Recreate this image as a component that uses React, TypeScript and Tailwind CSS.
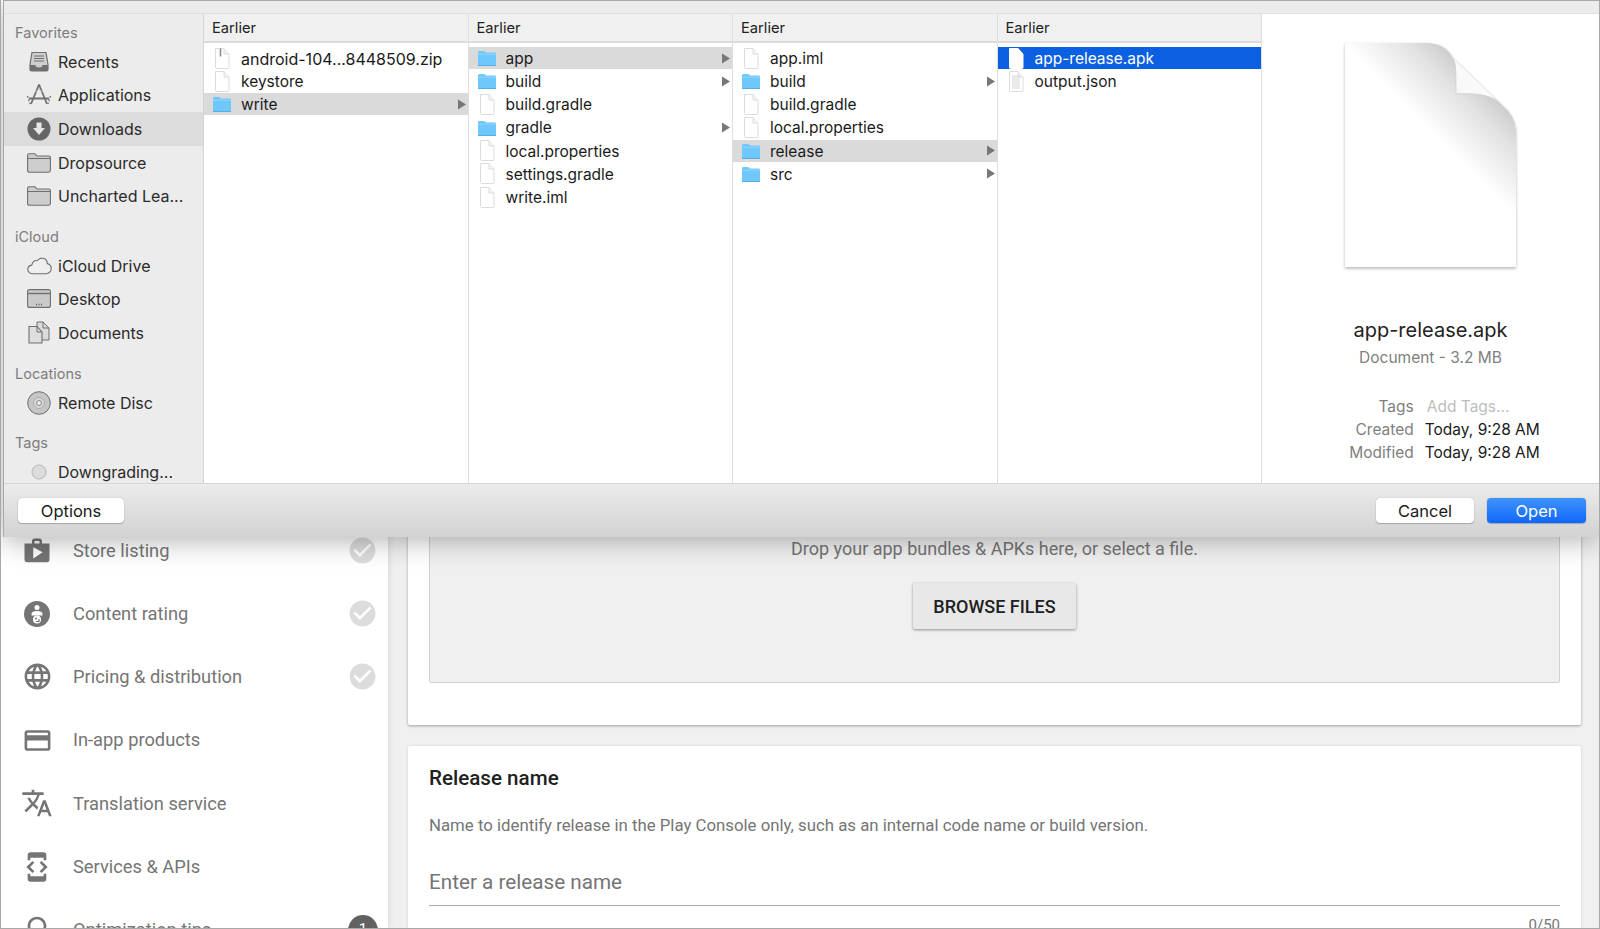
import { MdShop, MdLanguage, MdCreditCard, MdTranslate, MdDeveloperMode, MdCheckCircle, MdLightbulbOutline } from "react-icons/md";

type Kind = "file" | "folder" | "zip" | "text";

function FileIcon({ kind, selected }: { kind: Kind; selected?: boolean }) {
  if (kind === "folder") {
    return (
      <svg width="20" height="18" viewBox="0 0 20 18" className="shrink-0">
        <path d="M1 3.500C1 2.600 1.600 2 2.500 2h4.200c.6 0 1 .2 1.400.6L9 3.500h8.500c.9 0 1.500.6 1.500 1.500v10.500c0 .9-.6 1.500-1.500 1.500h-15C1.600 17 1 16.400 1 15.500z" fill="#6fc8fb" />
        <path d="M1 5.200h18" stroke="#93d6fc" strokeWidth="1" />
        <path d="M1 16.500h18" stroke="#55aee6" strokeWidth="1" />
      </svg>
    );
  }
  return (
    <svg width="20" height="23" viewBox="0 0 20 23" className="shrink-0">
      <path
        d="M3.500 1.500h8.500l5 5.500v13.500c0 .6-.4 1-1 1H4.500c-.6 0-1-.4-1-1z"
        fill="#fff"
        stroke={selected ? "#fff" : "#dcdcdc"}
        strokeWidth="1"
      />
      <path d="M12 1.500v5.500h5" fill={selected ? "#fff" : "#f4f4f4"} stroke={selected ? "#fff" : "#dcdcdc"} strokeWidth="1" />
      {kind === "zip" && <path d="M8.500 1.500v8" stroke="#8a8a8a" strokeWidth="1.600" />}
      {kind === "text" &&
        [6, 8, 10, 12, 14, 16, 18].map((y) => (
          <path key={y} d={`M6 ${y}h8`} stroke="#d4d4d4" strokeWidth="1" />
        ))}
    </svg>
  );
}

function Row({ name, kind, active, selected }: { name: string; kind: Kind; active?: boolean; selected?: boolean }) {
  return (
    <div
      className={`mb-[1.2px] flex h-[22px] items-center pl-[8px] pr-[1px] ${kind === "zip" ? "text-[16px]" : "text-[15.500px]"} ${
        selected ? "bg-[#0a60e0] text-white" : active ? "bg-[#dadada] text-[#1a1a1a]" : "text-[#1a1a1a]"
      }`}
    >
      <FileIcon kind={kind} selected={selected} />
      <span className="ml-[9px] flex-1 whitespace-nowrap pt-[1px]">{name}</span>
      {kind === "folder" && (
        <svg width="10" height="11" viewBox="0 0 10 11">
          <path d="M1 .5l8 5-8 5z" fill="#777" />
        </svg>
      )}
    </div>
  );
}

function Column({ rows }: { rows: { name: string; kind: Kind; active?: boolean; selected?: boolean }[] }) {
  return (
    <div className="flex h-full w-[264.500px] shrink-0 flex-col border-r border-[#dedede] bg-white">
      <div className="flex h-[29px] shrink-0 items-center border-b-2 border-[#dcdcdc] bg-[#f0f0f0] pl-[8px] pt-[1px] text-[14.700px] text-[#222]">
        Earlier
      </div>
      <div className="pt-[4px]">
        {rows.map((r) => (
          <Row key={r.name} {...r} />
        ))}
      </div>
    </div>
  );
}

const s = "#6f6f6f";

const sideIcons: Record<string, React.ReactNode> = {
  recents: (
    <svg width="24" height="24" viewBox="0 0 24 24">
      <path d="M5 2.500h14l2 12v5c0 1-.6 1.500-1.500 1.500h-15C3.600 21 3 20.500 3 19.500v-5z" fill="#cfcfcf" stroke={s} strokeWidth="1.200" />
      <path d="M7 6h10M7 8.500h10M7 11h10" stroke={s} strokeWidth="1" />
      <path d="M3 15h5.500c0 1.800 1.500 2.500 3.500 2.500s3.500-.7 3.500-2.500H21v4.500c0 1-.6 1.500-1.500 1.500h-15C3.600 21 3 20.500 3 19.500z" fill={s} />
    </svg>
  ),
  apps: (
    <svg width="26" height="24" viewBox="0 0 26 24">
      <path d="M13 1.500 5 21M13 1.500 21 21M3 15.500h20" stroke={s} strokeWidth="1.800" fill="none" />
      <path d="M8.500 9.500 13 6l4.500 3.500" stroke="#bbb" strokeWidth="1" fill="none" />
      <path d="M1.500 13 4 21M24.500 13 22 21" stroke={s} strokeWidth="1.200" strokeDasharray="2 1.500" />
    </svg>
  ),
  downloads: (
    <svg width="24" height="24" viewBox="0 0 24 24">
      <circle cx="12" cy="12" r="11.500" fill="#666" />
      <path d="M9.500 5.500h5V11h3.500L12 18 6 11h3.500z" fill="#e6e6e6" />
    </svg>
  ),
  folder: (
    <svg width="24" height="20" viewBox="0 0 24 20">
      <path d="M.6 2.500C.6 1.500 1.200.8 2.200.8H8l2 2.200h11.800c1 0 1.600.7 1.600 1.600v13c0 1-.6 1.600-1.600 1.600H2.200c-1 0-1.600-.6-1.600-1.600z" fill="#cdcdcd" stroke={s} strokeWidth="1.100" />
      <path d="M.6 5.500h22.800" stroke={s} strokeWidth="1" />
    </svg>
  ),
  cloud: (
    <svg width="25" height="18" viewBox="0 0 25 18">
      <path d="M6 16.800c-3 0-5.200-1.800-5.200-4.400 0-2.300 1.700-4 4-4.300C5.500 5 7.800 3.200 10.500 3.500c1.200-1.600 3-2.500 5-2.300 2.800.3 4.800 2.500 4.800 5.400 2.300.6 3.900 2.400 3.900 4.800 0 3-2.200 5.400-5.200 5.400z" fill="#efefef" stroke={s} strokeWidth="1.100" />
    </svg>
  ),
  desktop: (
    <svg width="24" height="20" viewBox="0 0 24 20">
      <rect x=".6" y=".6" width="22.800" height="17.800" rx="2" fill="#cacaca" stroke={s} strokeWidth="1.100" />
      <path d="M.6 4.500h22.800" stroke={s} strokeWidth="1.400" />
      <path d="M9 15.500h1M11.500 15.500h1M14 15.500h1" stroke="#555" strokeWidth="1.400" />
    </svg>
  ),
  documents: (
    <svg width="22" height="23" viewBox="0 0 22 23">
      <path d="M9 1h6l6 6v12H9z" fill="#dcdcdc" stroke={s} strokeWidth="1" />
      <path d="M1 5.500h8l5 5.500v11H1z" fill="#dedede" stroke={s} strokeWidth="1.100" />
      <path d="M9 5.500V11h5M15 1v6h6" fill="none" stroke={s} strokeWidth="1" />
    </svg>
  ),
  disc: (
    <svg width="24" height="24" viewBox="0 0 24 24">
      <circle cx="12" cy="12" r="11.300" fill="#c6c6c6" stroke={s} strokeWidth="1" />
      <circle cx="12" cy="12" r="5.500" fill="#d8d8d8" stroke="#aaa" strokeWidth="1" />
      <circle cx="12" cy="12" r="2.500" fill="#eee" stroke={s} strokeWidth=".8" />
    </svg>
  ),
  tag: (
    <svg width="16" height="16" viewBox="0 0 16 16">
      <circle cx="8" cy="8" r="7" fill="#dcdcdc" stroke="#b4b4b4" strokeWidth="1" />
    </svg>
  ),
};

const sidebar = [
  {
    label: "Favorites",
    items: [
      ["recents", "Recents"],
      ["apps", "Applications"],
      ["downloads", "Downloads"],
      ["folder", "Dropsource"],
      ["folder", "Uncharted Lea..."],
    ],
  },
  {
    label: "iCloud",
    items: [
      ["cloud", "iCloud Drive"],
      ["desktop", "Desktop"],
      ["documents", "Documents"],
    ],
  },
  { label: "Locations", items: [["disc", "Remote Disc"]] },
  { label: "Tags", items: [["tag", "Downgrading..."]] },
];

function MacButton({ label, primary, className }: { label: string; primary?: boolean; className: string }) {
  return (
    <button
      className={`flex h-[25px] items-center justify-center rounded-[4px] pt-[1px] text-[16.500px] shadow-[0_0_1px_rgba(0,0,0,0.4),0_1px_1px_rgba(0,0,0,0.2)] ${
        primary ? "bg-gradient-to-b from-[#3f93fb] to-[#0f66fb] text-white" : "bg-white text-[#1a1a1a]"
      } ${className}`}
    >
      {label}
    </button>
  );
}

function BigDocument() {
  return (
    <svg width="184" height="236" viewBox="0 0 184 236" className="shrink-0">
      <defs>
        <linearGradient id="curl" gradientUnits="userSpaceOnUse" x1="132" y1="37" x2="84" y2="85">
          <stop offset="0" stopColor="#cfcfcf" />
          <stop offset="0.35" stopColor="#e4e4e4" />
          <stop offset="1" stopColor="#ffffff" />
        </linearGradient>
        <linearGradient id="fold" x1="0" y1="1" x2="1" y2="0">
          <stop offset="0" stopColor="#f6f6f6" />
          <stop offset="1" stopColor="#ffffff" />
        </linearGradient>
        <filter id="paper" x="-10%" y="-10%" width="120%" height="120%">
          <feDropShadow dx="0" dy="1.500" stdDeviation="1.800" floodColor="#000" floodOpacity="0.3" />
        </filter>
      </defs>
      <path d="M6 4H87c13 0 22 5 27 15L160 63c10 9 17 16 17 31V228H6z" fill="url(#curl)" filter="url(#paper)" />
      <path d="M114 19c3 6 3 14 3 36 18-1 32 0 43 8z" fill="url(#fold)" />
      <path d="M114 19c3 6 3 14 3 36 18-1 32 0 43 8" fill="none" stroke="#c8c8c8" strokeWidth=".7" />
      <path d="M114 19 160 63" fill="none" stroke="#e2e2e2" strokeWidth=".8" />
    </svg>
  );
}

function Dialog() {
  return (
    <div className="absolute left-[2px] right-0 top-0 z-10 flex h-[537px] flex-col border-l border-t border-[#a8a8a8] bg-[#ececec] font-['Inter',sans-serif] shadow-[0_4px_26px_rgba(0,0,0,0.3)]">
      <div className="h-[13px] shrink-0 border-b border-[#e0e0e0]" />
      <div className="flex min-h-0 flex-1">
        <div className="h-full w-[200px] shrink-0 overflow-hidden border-r border-[#d4d4d4] bg-[#ececec] pt-[9px]">
          {sidebar.map((sec) => (
            <div key={sec.label} className="mb-[14px]">
              <div className="flex h-[20px] items-center pl-[11px] text-[14.500px] text-[#7d7d7d]">{sec.label}</div>
              <div className="pt-[2px]">
                {sec.items.map(([icon, name]) => (
                  <div
                    key={name}
                    className={`flex h-[33.600px] items-center text-[16px] text-[#2a2a2a] ${
                      name === "Downloads" ? "bg-[#dcdcdc]" : ""
                    }`}
                  >
                    <div className="flex w-[54px] shrink-0 justify-center pl-[16px]">{sideIcons[icon]}</div>
                    <span className="whitespace-nowrap">{name}</span>
                  </div>
                ))}
              </div>
            </div>
          ))}
        </div>
        <Column
          rows={[
            { name: "android-104...8448509.zip", kind: "zip" },
            { name: "keystore", kind: "file" },
            { name: "write", kind: "folder", active: true },
          ]}
        />
        <Column
          rows={[
            { name: "app", kind: "folder", active: true },
            { name: "build", kind: "folder" },
            { name: "build.gradle", kind: "file" },
            { name: "gradle", kind: "folder" },
            { name: "local.properties", kind: "file" },
            { name: "settings.gradle", kind: "file" },
            { name: "write.iml", kind: "file" },
          ]}
        />
        <Column
          rows={[
            { name: "app.iml", kind: "file" },
            { name: "build", kind: "folder" },
            { name: "build.gradle", kind: "file" },
            { name: "local.properties", kind: "file" },
            { name: "release", kind: "folder", active: true },
            { name: "src", kind: "folder" },
          ]}
        />
        <Column
          rows={[
            { name: "app-release.apk", kind: "file", selected: true },
            { name: "output.json", kind: "text" },
          ]}
        />
        <div className="flex min-w-0 flex-1 flex-col items-center bg-white pt-[25px]">
          <BigDocument />
          <div className="mt-[43px] text-[20px] leading-[24px] text-[#222]">app-release.apk</div>
          <div className="mt-[4px] text-[15.500px] leading-[24px] text-[#808080]">Document - 3.2 MB</div>
          <div className="ml-[28px] mt-[25px] grid grid-cols-[auto_auto] gap-x-[11px] text-[15.500px] leading-[23.200px]">
            <span className="text-right text-[#808080]">Tags</span>
            <span className="pl-[2px] text-[#bdbdbd]">Add Tags...</span>
            <span className="text-right text-[#808080]">Created</span>
            <span className="text-[#1a1a1a]">Today, 9:28 AM</span>
            <span className="text-right text-[#808080]">Modified</span>
            <span className="text-[#1a1a1a]">Today, 9:28 AM</span>
          </div>
        </div>
      </div>
      <div className="flex h-[54px] shrink-0 items-center justify-between border-t border-[#d6d6d6] bg-gradient-to-b from-[#ececec] to-[#d2d2d2] pl-[14px] pr-[13px]">
        <MacButton label="Options" className="w-[106px]" />
        <div className="flex gap-[13px]">
          <MacButton label="Cancel" className="w-[98px]" />
          <MacButton label="Open" primary className="w-[99px]" />
        </div>
      </div>
    </div>
  );
}

function ContentRatingIcon() {
  return (
    <svg width="26" height="26" viewBox="0 0 26 26" className="shrink-0">
      <circle cx="13" cy="13" r="13" fill="#757575" />
      <circle cx="13" cy="6.500" r="2.500" fill="#fff" />
      <path d="M7.500 13c0-2 2-3 5.500-3s5.500 1 5.500 3v1.500h-11z" fill="#fff" />
      <circle cx="13" cy="18.500" r="4" fill="#fff" />
      <circle cx="12" cy="17.500" r="1" fill="#757575" />
      <path d="M12 20.500h3v-2.500" fill="none" stroke="#757575" strokeWidth="1.200" />
    </svg>
  );
}

const navItems = [
  { label: "Store listing", icon: <MdShop size={30} />, done: true },
  { label: "Content rating", icon: <ContentRatingIcon />, done: true },
  { label: "Pricing & distribution", icon: <MdLanguage size={31} />, done: true },
  { label: "In-app products", icon: <MdCreditCard size={31} /> },
  { label: "Translation service", icon: <MdTranslate size={32} /> },
  { label: "Services & APIs", icon: <MdDeveloperMode size={34} /> },
  { label: "Optimization tips", icon: <MdLightbulbOutline size={32} />, badge: "1" },
];

export default function App() {
  return (
    <div className="relative h-[929px] w-[1600px] overflow-hidden border-x border-b border-[#a8a8a8] bg-[#f0f0f0] font-['Roboto',sans-serif]">
      <Dialog />
      <div className="flex h-full">
        <aside className="h-full w-[387px] shrink-0 bg-white pl-[20px] pr-[10px] pt-[519px] shadow-[0_0_8px_rgba(0,0,0,0.12)]">
          {navItems.map((item) => (
            <div key={item.label} className="flex h-[63.200px] items-center text-[18.300px] text-[#757575]">
              <div className="flex w-[32px] shrink-0 justify-center">{item.icon}</div>
              <span className="ml-[20px] flex-1 whitespace-nowrap">{item.label}</span>
              {item.done && <MdCheckCircle size={31} className="text-[#dcdcdc]" />}
              {item.badge && (
                <div className="flex h-[30px] w-[30px] items-center justify-center rounded-full bg-[#616161] text-[15px] text-white">
                  {item.badge}
                </div>
              )}
            </div>
          ))}
        </aside>
        <main className="min-w-0 flex-1 pl-[20px] pr-[18px] pt-[500px]">
          <section className="rounded-[2px] bg-white px-[21px] pb-[42px] shadow-[0_1px_3px_rgba(0,0,0,0.35)]">
            <div className="flex flex-col items-center rounded-[2px] border border-[#d0d0d0] bg-[#f0f0f0] pb-[53px] pt-[36px]">
              <p className="text-[18px] leading-[24px] text-[#757575]">
                Drop your app bundles &amp; APKs here, or select a file.
              </p>
              <button className="mt-[22px] h-[46px] w-[163px] rounded-[2px] bg-[#e8e8e8] text-[18px] font-medium text-[#212121] shadow-[0_1px_3px_rgba(0,0,0,0.4)]">
                BROWSE FILES
              </button>
            </div>
          </section>
          <section className="mt-[21px] h-[300px] rounded-[2px] bg-white px-[21px] pt-[20px] shadow-[0_0_3px_rgba(0,0,0,0.12)]">
            <h2 className="text-[20.600px] font-medium leading-[24px] text-[#212121]">Release name</h2>
            <p className="mt-[23px] text-[16.800px] leading-[24px] text-[#757575]">
              Name to identify release in the Play Console only, such as an internal code name or build version.
            </p>
            <div className="mt-[31px] border-b border-[#ababab] pb-[9px] text-[20.700px] leading-[28px] text-[#757575]">
              Enter a release name
            </div>
            <div className="mt-[10px] text-right text-[15px] leading-[18px] text-[#757575]">0/50</div>
          </section>
        </main>
      </div>
    </div>
  );
}
